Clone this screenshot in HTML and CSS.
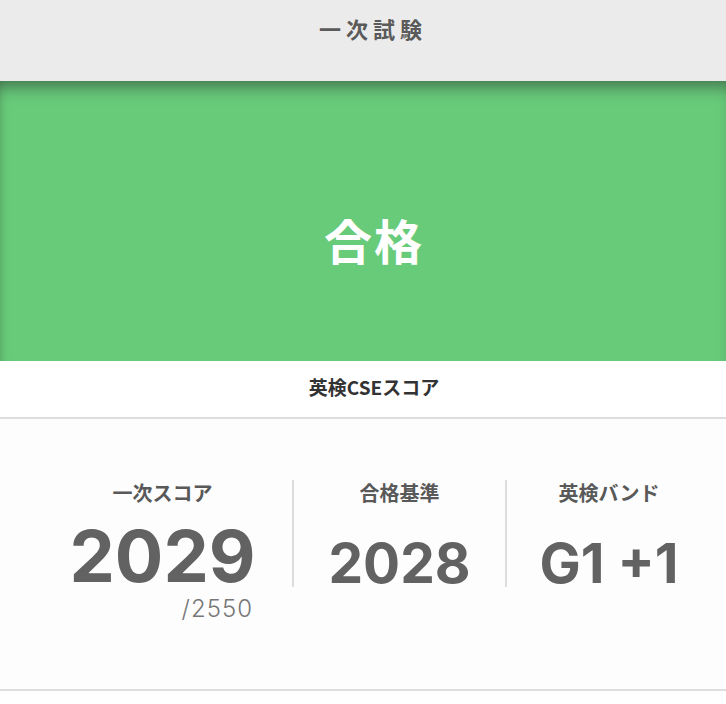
FILE: index.html
```html
<!DOCTYPE html>
<html lang="ja">
<head>
    <meta charset="UTF-8">
    <meta name="viewport" content="width=device-width, initial-scale=1.0">
    <title>一次試験 結果</title>
    <link rel="stylesheet" href="styles.css">
</head>
<body>

    <!-- 見出し -->
    <header class="exam-header">
        <h1>一次試験</h1>
    </header>

    <!-- 合否 -->
    <section class="result">
        <p class="result-text">合格</p>
    </section>

    <!-- スコア -->
    <section class="score-box">
        <h2 class="score-title">英検CSEスコア</h2>
        <div class="stats">
            <div class="stat stat-main">
                <p class="stat-label">一次スコア</p>
                <p class="stat-value big">2029</p>
                <p class="stat-max">/2550</p>
            </div>
            <div class="stat">
                <p class="stat-label">合格基準</p>
                <p class="stat-value">2028</p>
            </div>
            <div class="stat">
                <p class="stat-label">英検バンド</p>
                <p class="stat-value">G1 +1</p>
            </div>
        </div>
    </section>

</body>
</html>
```

FILE: styles.css
```css
/* 全体 */
* {
    margin: 0;
    padding: 0;
    box-sizing: border-box;
}

body {
    font-family: "Noto Sans CJK JP", "Noto Sans", sans-serif;
    background-color: #ffffff;
    color: #555555;
}

/* 見出し */
.exam-header {
    background-color: #ebebeb;
    height: 81px;
    padding: 12px 0 0 20px;
    text-align: center;
}

.exam-header h1 {
    font-size: 22px;
    line-height: 32px;
    font-weight: 700;
    letter-spacing: 5px;
    color: #5a5a5a;
}

/* 合否 */
.result {
    background-color: #68cb7a;
    height: 280px;
    display: flex;
    align-items: center;
    justify-content: center;
    padding: 0 0 0 22px;
    box-shadow: inset 0 14px 16px -8px rgba(40, 50, 45, 0.55), inset 6px 0 8px -6px rgba(0, 0, 0, 0.12);
}

.result-text {
    font-size: 48px;
    font-weight: 700;
    color: #ffffff;
    letter-spacing: 2px;
    padding-top: 36px;
}

/* スコア */
.score-title {
    height: 58px;
    line-height: 52px;
    font-size: 19px;
    font-weight: 700;
    color: #333333;
    text-align: center;
    padding-left: 22px;
    border-bottom: 2px solid #dddddd;
}

.stats {
    display: grid;
    grid-template-columns: 259px 213px 206px;
    align-items: start;
    padding: 61px 0 0 33px;
    height: 272px;
    background-color: #fdfdfd;
    border-bottom: 2px solid #dddddd;
}

.stat {
    text-align: center;
}

.stat + .stat {
    border-left: 2px solid #dddddd;
    height: 107px;
}

.stat-label {
    font-size: 20px;
    line-height: 26px;
    font-weight: 700;
    color: #595959;
}

.stat-value {
    font-family: Inter, "Liberation Sans", sans-serif;
    font-weight: 700;
    font-size: 55px;
    line-height: 50px;
    margin-top: 32px;
    color: #626262;
}

.stat-value.big {
    font-size: 72px;
    line-height: 60px;
    margin-top: 20px;
}

.stat-max {
    font-family: Inter, "Liberation Sans", sans-serif;
    font-weight: 300;
    font-size: 24px;
    line-height: 22px;
    letter-spacing: 1px;
    color: #777777;
    text-align: right;
    padding-right: 39px;
    margin-top: 12px;
}
```
